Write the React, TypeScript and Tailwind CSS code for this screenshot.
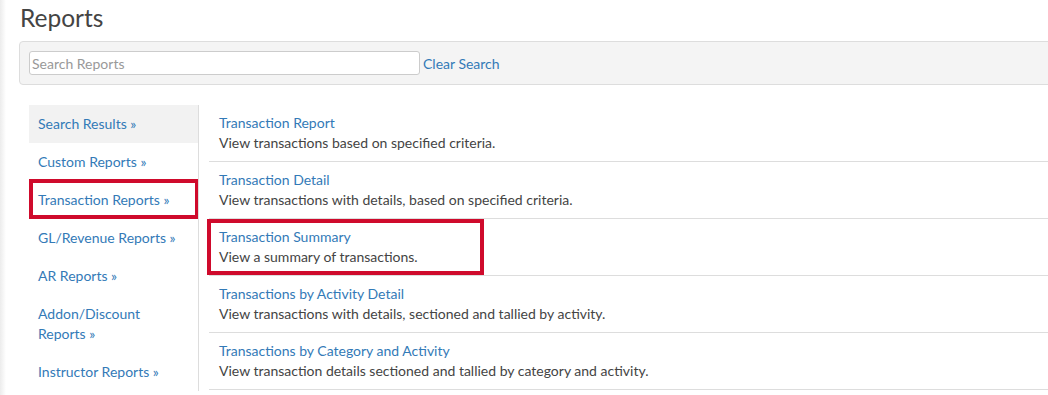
import React from 'react';

// ── Data ──────────────────────────────────────────────────────────────────────

const NAV_ITEMS = [
  { label: 'Search Results', active: true },
  { label: 'Custom Reports' },
  { label: 'Transaction Reports', marked: true },
  { label: 'GL/Revenue Reports' },
  { label: 'AR Reports' },
  { label: 'Addon/Discount Reports' },
  { label: 'Instructor Reports' },
];

const REPORTS = [
  { title: 'Transaction Report', desc: 'View transactions based on specified criteria.' },
  { title: 'Transaction Detail', desc: 'View transactions with details, based on specified criteria.' },
  { title: 'Transaction Summary', desc: 'View a summary of transactions.' },
  { title: 'Transactions by Activity Detail', desc: 'View transactions with details, sectioned and tallied by activity.' },
  { title: 'Transactions by Category and Activity', desc: 'View transaction details sectioned and tallied by category and activity.' },
];

// ── Side nav ──────────────────────────────────────────────────────────────────

function SideNav() {
  return (
    <div className="relative w-[169px] shrink-0">
      {NAV_ITEMS.map((item) => (
        <a
          key={item.label}
          href="#"
          className={
            'block py-[9px] pl-[9px] pr-[12px] text-[14px] leading-[20px] text-[#337ab7] ' +
            (item.active ? 'bg-[#f2f2f2]' : '')
          }
        >
          {item.label} »
        </a>
      ))}
      {/* annotation box */}
      <div className="absolute left-0 top-[74px] h-[40px] w-[170px] border-4 border-[#cf0a2c]" />
    </div>
  );
}

// ── Report list ───────────────────────────────────────────────────────────────

function ReportList() {
  return (
    <div className="relative flex-1 border-l border-[#ddd] pl-[10px]">
      {REPORTS.map((r) => (
        <div key={r.title} className="border-b border-[#ddd] py-[8px] pl-[10px] text-[14px] leading-[20px]">
          <a href="#" className="block text-[#337ab7]">{r.title}</a>
          <p className="text-[#444]">{r.desc}</p>
        </div>
      ))}
      {/* annotation box */}
      <div className="absolute left-[8px] top-[114px] h-[56px] w-[277px] border-4 border-[#cf0a2c]" />
    </div>
  );
}

// ── App ───────────────────────────────────────────────────────────────────────

export default function App() {
  return (
    <div className="flex h-[395px] w-full overflow-hidden bg-white font-['Lato','Noto_Sans',sans-serif]">
      <div className="w-[6px] shrink-0 bg-gradient-to-r from-[#ececec] to-white" />

      <div className="min-w-0 flex-1 pl-[13px]">
        <h1 className="mt-[5px] pl-px text-[24.5px] leading-[26px] text-[#444]">Reports</h1>

        <div className="mr-[-12px] mt-[10px] flex h-[44px] items-center rounded-l-[4px] border border-[#ddd] bg-[#f4f4f4] pl-[9px]">
          <input
            type="text"
            placeholder="Search Reports"
            className="h-[24px] w-[391px] rounded-[3px] border border-[#ccc] bg-white px-[2px] text-[14px] text-[#444] outline-none placeholder:text-[#999]"
          />
          <a href="#" className="ml-[3px] text-[14px] text-[#337ab7]">Clear Search</a>
        </div>

        <div className="mt-[20px] flex pl-[10px]">
          <SideNav />
          <ReportList />
        </div>
      </div>
    </div>
  );
}
